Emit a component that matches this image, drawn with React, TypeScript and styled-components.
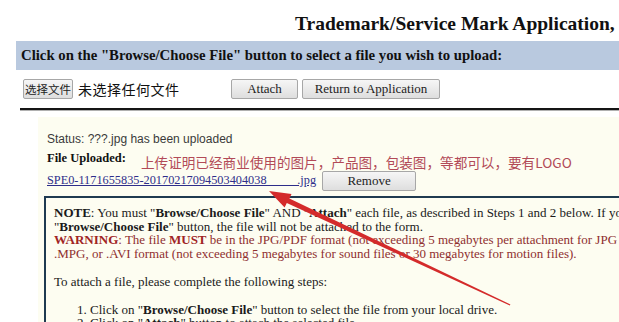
import React from "react";
import styled, { createGlobalStyle } from "styled-components";

const Global = createGlobalStyle`
  html, body { margin: 0; padding: 0; background: #ffffff; }
  body { width: 619px; height: 322px; overflow: hidden; font-family: "Liberation Serif", "Times New Roman", serif; }
`;

const Page = styled.div`
  position: relative;
  width: 619px;
  height: 322px;
  overflow: hidden;
  background: #ffffff;
`;

const Title = styled.h1`
  margin: 0;
  box-sizing: border-box;
  height: 41px;
  padding: 12px 0 0 295px;
  font-family: "Liberation Serif", "Times New Roman", serif;
  font-weight: bold;
  font-size: 19.5px;
  line-height: 24px;
  color: #111111;
  white-space: nowrap;
`;

const BlueBar = styled.div`
  margin-left: 16px;
  height: 29px;
  display: flex;
  align-items: center;
  padding-left: 5px;
  background: #b9c9df;
  font-weight: bold;
  font-size: 14.75px;
  color: #111111;
  white-space: nowrap;
`;

const Controls = styled.div`
  height: 38px;
  display: flex;
  align-items: center;
  padding-left: 23px;
`;

const FileGroup = styled.div`
  width: 208px;
  display: flex;
  align-items: center;
  gap: 5px;
`;

const Button = styled.button<{ $w: number; $cjk?: boolean }>`
  box-sizing: border-box;
  width: ${(p) => p.$w}px;
  height: 20px;
  padding: 0;
  margin: 0;
  border: 1px solid #a7a7a7;
  border-radius: 2px;
  background: linear-gradient(#f6f6f6, #dedede);
  color: #222222;
  font-family: ${(p) =>
    p.$cjk
      ? '"Noto Sans CJK SC", "Noto Sans", sans-serif'
      : '"Liberation Serif", "Times New Roman", serif'};
  font-size: ${(p) => (p.$cjk ? "11.5px" : "13px")};
  line-height: 18px;
  text-align: center;
  white-space: nowrap;
  overflow: visible;
`;

const FileLabel = styled.span`
  font-family: "Noto Sans CJK SC", "Noto Sans", sans-serif;
  font-size: 14px;
  letter-spacing: 0.5px;
  color: #111111;
`;

const Spacer = styled.span`
  width: 4px;
`;

const Rule = styled.div`
  margin-left: 20px;
  height: 2px;
  background: #151515;
  border-bottom: 1px solid #b0b0b0;
`;

const Content = styled.div`
  margin: 6px 0 0 38px;
  height: 300px;
  box-sizing: border-box;
  padding: 15px 0 0 9px;
  background: #fdfdf1;
`;

const Status = styled.div`
  font-family: "Liberation Sans", Arial, sans-serif;
  font-size: 12px;
  line-height: 14px;
  color: #3a3a3a;
`;

const FileUploaded = styled.div`
  margin-top: 5px;
  font-weight: bold;
  font-size: 12.5px;
  line-height: 14px;
  color: #111111;
`;

const LinkRow = styled.div`
  margin-top: 6px;
  height: 19px;
  display: flex;
  align-items: center;
  gap: 6px;
`;

const FileLink = styled.a`
  font-size: 12.3px;
  color: #2e2e8a;
  text-decoration: underline;
  white-space: nowrap;
`;

const NoteBox = styled.div`
  margin: 6px 0 0 -3px;
  width: 820px;
  box-sizing: border-box;
  padding: 8px 0 0 8px;
  border-top: 2px solid #1f3a50;
  border-left: 2px solid #1f3a50;
  font-size: 13px;
  line-height: 13.7px;
  color: #1a1a1a;
`;

const Line = styled.div<{ $warn?: boolean; $gap?: number; $indent?: number }>`
  white-space: nowrap;
  color: ${(p) => (p.$warn ? "#8f2f2f" : "#1a1a1a")};
  margin-top: ${(p) => p.$gap ?? 0}px;
  padding-left: ${(p) => p.$indent ?? 0}px;
  b.warn { color: #a02424; }
`;

const Annotation = styled.div`
  position: absolute;
  left: 141px;
  top: 153px;
  font-family: "Noto Sans CJK SC", "Noto Sans", sans-serif;
  font-size: 13.6px;
  line-height: 18px;
  color: #b24a57;
  white-space: nowrap;
`;

const ArrowSvg = styled.svg`
  position: absolute;
  left: 0;
  top: 0;
  pointer-events: none;
`;

export default function App() {
  return (
    <Page>
      <Global />
      <Title>Trademark/Service Mark Application,</Title>
      <BlueBar>Click on the "Browse/Choose File" button to select a file you wish to upload:</BlueBar>
      <Controls>
        <FileGroup>
          <Button $w={50} $cjk>选择文件</Button>
          <FileLabel>未选择任何文件</FileLabel>
        </FileGroup>
        <Button $w={67}>Attach</Button>
        <Spacer />
        <Button $w={138}>Return to Application</Button>
      </Controls>
      <Rule />
      <Content>
        <Status>Status: ???.jpg has been uploaded</Status>
        <FileUploaded>File Uploaded:</FileUploaded>
        <LinkRow>
          <FileLink href="#">SPE0-1171655835-20170217094503404038_____.jpg</FileLink>
          <Button $w={94}>Remove</Button>
        </LinkRow>
        <NoteBox>
          <Line>
            <b>NOTE</b>: You must "<b>Browse/Choose File</b>" AND "<b>Attach</b>" each file, as described in Steps 1 and 2 below. If you do not click "Attach" after using the
          </Line>
          <Line>
            "<b>Browse/Choose File</b>" button, the file will not be attached to the form.
          </Line>
          <Line $warn>
            <b className="warn">WARNING</b>: The file <b className="warn">MUST</b> be in the JPG/PDF format (not exceeding 5 megabytes per attachment for JPG or PDF files), or in .WAV, .WMV, .WMA, .MP3,
          </Line>
          <Line $warn>
            .MPG, or .AVI format (not exceeding 5 megabytes for sound files or 30 megabytes for motion files).
          </Line>
          <Line $gap={14}>To attach a file, please complete the following steps:</Line>
          <Line $gap={14} $indent={23}>
            1. Click on "<b>Browse/Choose File</b>" button to select the file from your local drive.
          </Line>
          <Line $indent={23}>
            2. Click on "<b>Attach</b>" button to attach the selected file.
          </Line>
        </NoteBox>
      </Content>
      <Annotation>上传证明已经商业使用的图片，产品图，包装图，等都可以，要有LOGO</Annotation>
      <ArrowSvg width="619" height="322" viewBox="0 0 619 322">
        <polygon
          points="269,191 291.5,194 289.4,198.4 510.4,304.4 509.8,305.6 286.8,203 284.6,207.4"
          fill="#d42b2b"
        />
      </ArrowSvg>
    </Page>
  );
}
